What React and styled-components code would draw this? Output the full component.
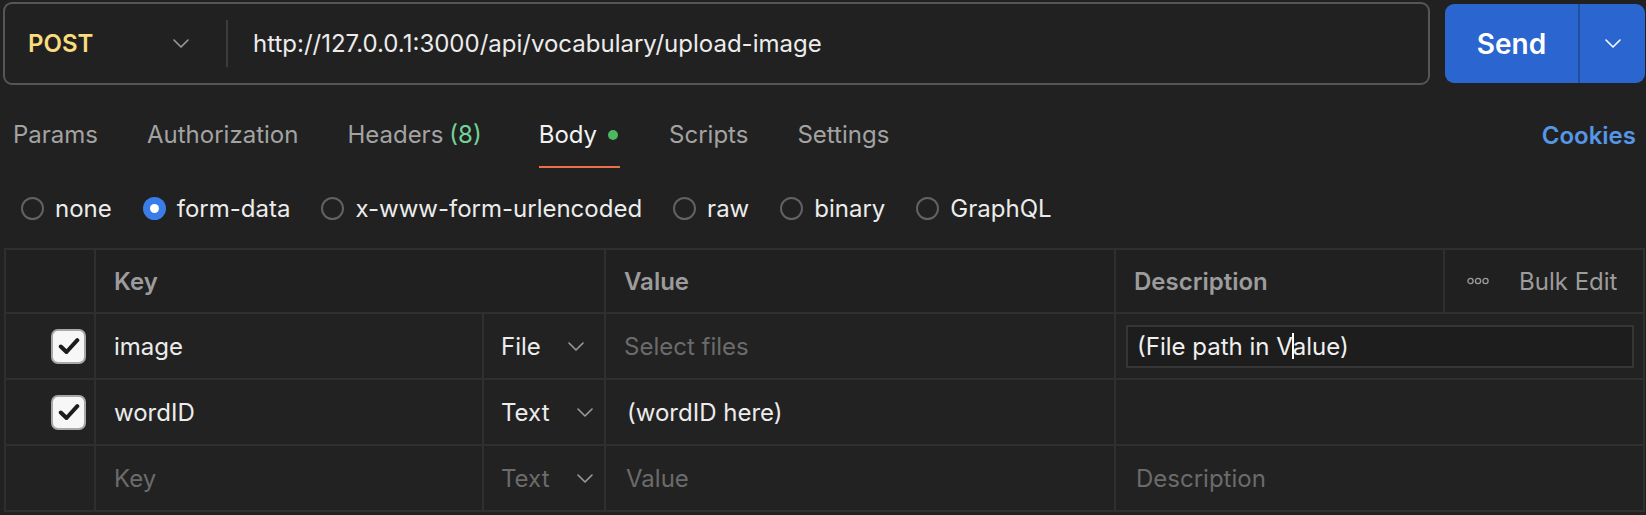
import React from "react";
import styled, { createGlobalStyle } from "styled-components";

const Global = createGlobalStyle`
  html, body { margin: 0; padding: 0; background: #212121; }
  body { font-family: Inter, "Noto Sans", "Liberation Sans", sans-serif; color: #e8e8e8; }
  * { box-sizing: border-box; }
`;

const Page = styled.div`
  width: 1646px;
  height: 515px;
  padding: 2px 1px 0 3px;
  background: #212121;
  overflow: hidden;
`;

const TopBar = styled.div`
  display: flex;
  align-items: center;
  gap: 15px;
  height: 83px;
`;

const UrlBox = styled.div`
  flex: 1;
  height: 83px;
  display: flex;
  align-items: center;
  border: 2px solid #565656;
  border-radius: 9px;
  background: #212121;
`;

const Method = styled.div`
  width: 221px;
  display: flex;
  align-items: center;
  justify-content: space-between;
  padding: 0 37px 0 23px;
  font-size: 24px;
  font-weight: 600;
  color: #f8dc7e;
`;

const VDivider = styled.div`
  width: 2px;
  height: 47px;
  background: #3c3c3c;
`;

const UrlText = styled.div`
  margin-left: 25px;
  font-size: 24px;
  color: #ececec;
`;

const SendGroup = styled.div`
  width: 200px;
  height: 79px;
  display: flex;
  border-radius: 9px;
  overflow: hidden;
  background: #2b65cf;
`;

const SendMain = styled.div`
  width: 135px;
  display: flex;
  align-items: center;
  justify-content: center;
  font-size: 28px;
  font-weight: 600;
  color: #ffffff;
  border-right: 2px solid #1f4f9f;
`;

const SendDrop = styled.div`
  flex: 1;
  display: flex;
  align-items: center;
  justify-content: center;
`;

const TabsRow = styled.div`
  display: flex;
  align-items: flex-start;
  justify-content: space-between;
  margin-top: 15px;
  padding: 0 9px 0 10px;
`;

const TabList = styled.div`
  display: flex;
  gap: 49px;
`;

const Tab = styled.div`
  height: 68px;
  padding-top: 3px;
  margin-left: ${(p) => (p.$active ? "8px" : "0")};
  display: flex;
  align-items: center;
  gap: 6px;
  font-size: 24px;
  color: ${(p) => (p.$active ? "#f2f2f2" : "#a3a3a3")};
  border-bottom: 2px solid ${(p) => (p.$active ? "#ea7048" : "transparent")};
`;

const Count = styled.span`
  color: #72d399;
`;

const Dot = styled.span`
  width: 10px;
  height: 10px;
  border-radius: 50%;
  background: #4cb85f;
  margin-left: 5px;
  margin-right: 2px;
`;

const Cookies = styled.div`
  height: 68px;
  padding-top: 3px;
  display: flex;
  align-items: center;
  font-size: 24px;
  font-weight: 600;
  color: #5596e6;
`;

const RadioRow = styled.div`
  height: 80px;
  display: flex;
  align-items: center;
  gap: 31px;
  padding-left: 18px;
`;

const RadioItem = styled.label`
  display: flex;
  align-items: center;
  gap: 11px;
  font-size: 24px;
  color: #ececec;
`;

const RadioCircle = styled.span`
  width: 23px;
  height: 23px;
  border-radius: 50%;
  display: flex;
  align-items: center;
  justify-content: center;
  border: ${(p) => (p.$checked ? "none" : "2px solid #626262")};
  background: ${(p) => (p.$checked ? "#3a7de8" : "transparent")};
  &::after {
    content: "";
    display: ${(p) => (p.$checked ? "block" : "none")};
    width: 9px;
    height: 9px;
    border-radius: 50%;
    background: #ffffff;
  }
`;

const Table = styled.div`
  margin-left: 1px;
  width: 1641px;
  display: grid;
  grid-template-columns: 90px 388px 122px 510px 329px 200px;
  grid-template-rows: 64px 66px 66px 66px;
  border-top: 2px solid #2f2f2f;
  border-left: 2px solid #2f2f2f;
`;

const Cell = styled.div`
  grid-column: ${(p) => (p.$span ? `span ${p.$span}` : "auto")};
  display: flex;
  align-items: center;
  border-right: 2px solid #2f2f2f;
  border-bottom: 2px solid #2f2f2f;
  padding-left: ${(p) => p.$pad ?? 18}px;
  padding-right: ${(p) => p.$padR ?? 0}px;
  justify-content: ${(p) => p.$justify || "flex-start"};
  font-size: 24px;
  background: ${(p) => (p.$head ? "#202020" : "#222222")};
`;

const HeadText = styled.span`
  font-weight: 600;
  color: #9c9c9c;
`;

const CellText = styled.span`
  color: ${(p) => (p.$muted ? "#6b6b6b" : "#ececec")};
`;

const TypeSelect = styled.div`
  display: flex;
  align-items: center;
  gap: 27px;
  color: ${(p) => (p.$muted ? "#6b6b6b" : "#ececec")};
`;

const Check = styled.span`
  width: 35px;
  height: 35px;
  border-radius: 7px;
  background: #f7f7f7;
  border: 2px solid #a8a8a8;
  display: flex;
  align-items: center;
  justify-content: center;
`;

const BulkWrap = styled.div`
  display: flex;
  align-items: center;
  gap: 30px;
  color: #9c9c9c;
`;

const DescInput = styled.div`
  flex: 1;
  height: 43px;
  margin: 0 9px 0 10px;
  display: flex;
  align-items: center;
  padding-left: 9px;
  border: 2px solid #363636;
  background: #1d1d1d;
  color: #f0f0f0;
`;

const Caret = styled.span`
  display: inline-block;
  width: 2px;
  height: 26px;
  background: #ffffff;
  margin: 0 -1px;
`;

const Chevron = ({ color = "#9a9a9a", w = 16 }) => (
  <svg width={w} height={w / 2 + 1} viewBox="0 0 16 9" fill="none">
    <path d="M1 1 L8 8 L15 1" stroke={color} strokeWidth="1.6" strokeLinecap="round" strokeLinejoin="round" />
  </svg>
);

const CheckIcon = () => (
  <svg width="22" height="18" viewBox="0 0 22 18" fill="none">
    <path d="M2.8 9.5 L8.5 15 L19.3 3.2" stroke="#1c1c1c" strokeWidth="4" strokeLinecap="round" strokeLinejoin="round" />
  </svg>
);

const Dots = () => (
  <svg width="22" height="8" viewBox="0 0 22 8" fill="none">
    {[3.5, 11, 18.5].map((cx) => (
      <circle key={cx} cx={cx} cy="4" r="2.6" stroke="#9c9c9c" strokeWidth="1.3" />
    ))}
  </svg>
);

const radios = [
  { label: "none" },
  { label: "form-data", checked: true },
  { label: "x-www-form-urlencoded" },
  { label: "raw" },
  { label: "binary" },
  { label: "GraphQL" },
];

export default function App() {
  return (
    <>
      <Global />
      <Page>
        <TopBar>
          <UrlBox>
            <Method>
              POST
              <Chevron color="#9a9a9a" />
            </Method>
            <VDivider />
            <UrlText>http://127.0.0.1:3000/api/vocabulary/upload-image</UrlText>
          </UrlBox>
          <SendGroup>
            <SendMain>Send</SendMain>
            <SendDrop>
              <Chevron color="#ffffff" />
            </SendDrop>
          </SendGroup>
        </TopBar>

        <TabsRow>
          <TabList>
            <Tab>Params</Tab>
            <Tab>Authorization</Tab>
            <Tab>
              Headers <Count>(8)</Count>
            </Tab>
            <Tab $active>
              Body<Dot />
            </Tab>
            <Tab>Scripts</Tab>
            <Tab>Settings</Tab>
          </TabList>
          <Cookies>Cookies</Cookies>
        </TabsRow>

        <RadioRow>
          {radios.map((r) => (
            <RadioItem key={r.label}>
              <RadioCircle $checked={r.checked} />
              {r.label}
            </RadioItem>
          ))}
        </RadioRow>

        <Table>
          <Cell $head />
          <Cell $head $span={2}>
            <HeadText>Key</HeadText>
          </Cell>
          <Cell $head>
            <HeadText>Value</HeadText>
          </Cell>
          <Cell $head>
            <HeadText>Description</HeadText>
          </Cell>
          <Cell $head $pad={22}>
            <BulkWrap>
              <Dots />
              Bulk Edit
            </BulkWrap>
          </Cell>

          <Cell $pad={0} $padR={8} $justify="flex-end">
            <Check>
              <CheckIcon />
            </Check>
          </Cell>
          <Cell $pad={18}>
            <CellText>image</CellText>
          </Cell>
          <Cell $pad={17}>
            <TypeSelect>
              File <Chevron />
            </TypeSelect>
          </Cell>
          <Cell $pad={18}>
            <CellText $muted>Select files</CellText>
          </Cell>
          <Cell $span={2} $pad={0}>
            <DescInput>
              (File path in V<Caret />alue)
            </DescInput>
          </Cell>

          <Cell $pad={0} $padR={8} $justify="flex-end">
            <Check>
              <CheckIcon />
            </Check>
          </Cell>
          <Cell $pad={18}>
            <CellText>wordID</CellText>
          </Cell>
          <Cell $pad={17}>
            <TypeSelect>
              Text <Chevron />
            </TypeSelect>
          </Cell>
          <Cell $pad={21}>
            <CellText>(wordID here)</CellText>
          </Cell>
          <Cell $span={2} />

          <Cell />
          <Cell $pad={18}>
            <CellText $muted>Key</CellText>
          </Cell>
          <Cell $pad={17}>
            <TypeSelect $muted>
              Text <Chevron />
            </TypeSelect>
          </Cell>
          <Cell $pad={20}>
            <CellText $muted>Value</CellText>
          </Cell>
          <Cell $span={2} $pad={20}>
            <CellText $muted>Description</CellText>
          </Cell>
        </Table>
      </Page>
    </>
  );
}
